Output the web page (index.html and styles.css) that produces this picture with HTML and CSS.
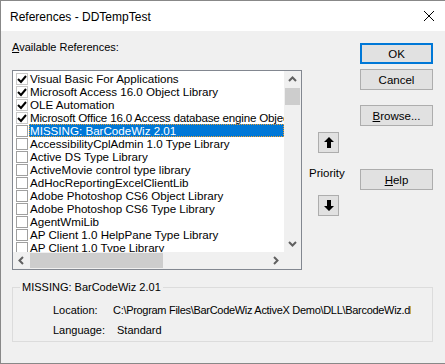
FILE: index.html
```html
<!DOCTYPE html>
<html lang="en">
<head>
    <meta charset="UTF-8">
    <title>References - DDTempTest</title>
    <link rel="stylesheet" href="styles.css">
</head>
<body>
    <div class="window">
        <div class="titlebar">
            <span class="title">References - DDTempTest</span>
            <svg class="close" width="10" height="10" viewBox="0 0 10 10"><path d="M0 0 L10 10 M10 0 L0 10" stroke="#000" stroke-width="1"/></svg>
        </div>
        <div class="content">
            <div class="top">
                <div class="col-list">
                    <div class="label"><u>A</u>vailable References:</div>
                    <div class="listbox">
                        <div class="items">
                            <div class="item"><span class="check on"><svg width="10" height="10" viewBox="0 0 10 10"><path d="M1 5 L4 8 L9 2" fill="none" stroke="#000" stroke-width="2"/></svg></span><span class="text">Visual Basic For Applications</span></div>
                            <div class="item"><span class="check on"><svg width="10" height="10" viewBox="0 0 10 10"><path d="M1 5 L4 8 L9 2" fill="none" stroke="#000" stroke-width="2"/></svg></span><span class="text">Microsoft Access 16.0 Object Library</span></div>
                            <div class="item"><span class="check on"><svg width="10" height="10" viewBox="0 0 10 10"><path d="M1 5 L4 8 L9 2" fill="none" stroke="#000" stroke-width="2"/></svg></span><span class="text">OLE Automation</span></div>
                            <div class="item"><span class="check on"><svg width="10" height="10" viewBox="0 0 10 10"><path d="M1 5 L4 8 L9 2" fill="none" stroke="#000" stroke-width="2"/></svg></span><span class="text long">Microsoft Office 16.0 Access database engine Object Library</span></div>
                            <div class="item selected"><span class="check"></span><span class="text">MISSING: BarCodeWiz 2.01</span></div>
                            <div class="item"><span class="check"></span><span class="text">AccessibilityCplAdmin 1.0 Type Library</span></div>
                            <div class="item"><span class="check"></span><span class="text">Active DS Type Library</span></div>
                            <div class="item"><span class="check"></span><span class="text">ActiveMovie control type library</span></div>
                            <div class="item"><span class="check"></span><span class="text">AdHocReportingExcelClientLib</span></div>
                            <div class="item"><span class="check"></span><span class="text">Adobe Photoshop CS6 Object Library</span></div>
                            <div class="item"><span class="check"></span><span class="text">Adobe Photoshop CS6 Type Library</span></div>
                            <div class="item"><span class="check"></span><span class="text">AgentWmiLib</span></div>
                            <div class="item"><span class="check"></span><span class="text">AP Client 1.0 HelpPane Type Library</span></div>
                            <div class="item"><span class="check"></span><span class="text">AP Client 1.0 Type Library</span></div>
                        </div>
                        <div class="vscroll">
                            <svg class="arrow" width="17" height="17" viewBox="0 0 17 17"><path d="M5 10 L8.5 6.5 L12 10" fill="none" stroke="#606060" stroke-width="2"/></svg>
                            <div class="vthumb"></div>
                            <div class="spacer"></div>
                            <svg class="arrow" width="17" height="17" viewBox="0 0 17 17"><path d="M5 7 L8.5 10.5 L12 7" fill="none" stroke="#606060" stroke-width="2"/></svg>
                        </div>
                        <div class="hscroll">
                            <svg class="arrow" width="17" height="17" viewBox="0 0 17 17"><path d="M10 5 L6.5 8.5 L10 12" fill="none" stroke="#606060" stroke-width="2"/></svg>
                            <div class="hthumb"></div>
                            <div class="spacer"></div>
                            <svg class="arrow" width="17" height="17" viewBox="0 0 17 17"><path d="M7 5 L10.5 8.5 L7 12" fill="none" stroke="#606060" stroke-width="2"/></svg>
                        </div>
                        <div class="corner"></div>
                    </div>
                </div>
                <div class="col-priority">
                    <button class="arrowbtn"><svg width="10" height="11" viewBox="0 0 10 11"><path d="M5 0 L10 5 L7 5 L7 11 L3 11 L3 5 L0 5 Z" fill="#000"/></svg></button>
                    <div class="priority">Priority</div>
                    <button class="arrowbtn"><svg width="10" height="11" viewBox="0 0 10 11"><path d="M5 11 L10 6 L7 6 L7 0 L3 0 L3 6 L0 6 Z" fill="#000"/></svg></button>
                </div>
                <div class="col-buttons">
                    <button class="btn default">OK</button>
                    <button class="btn">Cancel</button>
                    <button class="btn browse"><u>B</u>rowse...</button>
                    <button class="btn help"><u>H</u>elp</button>
                </div>
            </div>
            <fieldset class="group">
                <legend>MISSING: BarCodeWiz 2.01</legend>
                <div class="info">
                    <span class="key">Location:</span>
                    <span class="value path">C:\Program Files\BarCodeWiz ActiveX Demo\DLL\BarcodeWiz.dll</span>
                    <span class="key">Language:</span>
                    <span class="value lang">Standard</span>
                </div>
            </fieldset>
        </div>
    </div>
</body>
</html>
```

FILE: styles.css
```css
body {
    margin: 0;
    font-family: "Liberation Sans", Arial, sans-serif;
    font-size: 11px;
    color: #000;
    background: #f0f0f0;
}

.window {
    width: 445px;
    height: 364px;
    box-sizing: border-box;
    border: 1px solid #888;
    border-right: none;
    background: #f0f0f0;
    overflow: hidden;
}

.titlebar {
    display: flex;
    align-items: center;
    justify-content: space-between;
    height: 30px;
    padding: 0 11px 0 9px;
    background: #fff;
}
.title {
    font-size: 12px;
    padding-top: 1px;
}

.content {
    padding: 0 11px;
}

.top {
    display: flex;
}

.col-list {
    width: 290px;
}
.label {
    margin-top: 9px;
    height: 30px;
    line-height: 14px;
}

.listbox {
    display: grid;
    grid-template-columns: 271px 17px;
    grid-template-rows: 181px 17px;
    width: 290px;
    height: 200px;
    box-sizing: border-box;
    border: 1px solid #828790;
    background: #fff;
}
.items {
    overflow: hidden;
    padding-top: 1px;
}
.item {
    display: flex;
    align-items: center;
    height: 13px;
    white-space: nowrap;
    font-size: 11.6px;
}
.check {
    display: flex;
    align-items: center;
    justify-content: center;
    flex: none;
    width: 10px;
    height: 10px;
    margin: 0 1px 0 3px;
    border: 1px solid #a0a0a0;
    background: #fff;
}
.check.on {
    border-color: #c8c8c8;
}
.text {
    padding: 0 1px;
    line-height: 13px;
}
.text.long {
    letter-spacing: -0.2px;
}
.item.selected .text {
    flex: 1;
    color: #fff;
    background: #0078d7;
    outline: 1px dotted #f0a030;
    outline-offset: -1px;
}

.vscroll, .hscroll {
    display: flex;
    background: #f0f0f0;
}
.vscroll {
    flex-direction: column;
}
.vthumb {
    height: 17px;
    margin: 0 1px;
    background: #cdcdcd;
}
.hthumb {
    width: 133px;
    margin: 1px 0;
    background: #cdcdcd;
}
.spacer {
    flex: 1;
}
.arrow {
    flex: none;
}
.corner {
    background: #f0f0f0;
}

.col-priority {
    display: flex;
    flex-direction: column;
    align-items: flex-start;
    width: 58px;
    padding-top: 101px;
    padding-left: 7px;
    box-sizing: border-box;
}
.arrowbtn {
    display: flex;
    align-items: center;
    justify-content: center;
    width: 21px;
    height: 21px;
    padding: 0;
    margin-left: 9px;
    background: #e1e1e1;
    border: 1px solid #adadad;
}
.priority {
    height: 42px;
    line-height: 40px;
    font-size: 11.5px;
}

.col-buttons {
    display: flex;
    flex-direction: column;
    padding-top: 12px;
}
.btn {
    width: 73px;
    height: 21px;
    padding: 0;
    margin-bottom: 5px;
    font-family: "Liberation Sans", Arial, sans-serif;
    font-size: 11.5px;
    color: #000;
    background: #e1e1e1;
    border: 1px solid #adadad;
}
.btn.default {
    border: 2px solid #0078d7;
}
.btn.browse {
    margin-top: 10px;
}
.btn.help {
    margin-top: 38px;
}

.group {
    width: 421px;
    height: 62px;
    box-sizing: border-box;
    margin: 10px 0 0;
    padding: 0;
    border: 1px solid #dcdcdc;
}
.group legend {
    margin-left: 7px;
    padding: 0 2px;
    line-height: 14px;
}
.info {
    display: grid;
    grid-template-columns: 60px 298px;
    row-gap: 6px;
    padding: 9px 0 0 40px;
    line-height: 14px;
}
.value {
    white-space: nowrap;
    overflow: hidden;
}
.value.path {
    letter-spacing: -0.3px;
}
.value.lang {
    padding-left: 4px;
}
```
